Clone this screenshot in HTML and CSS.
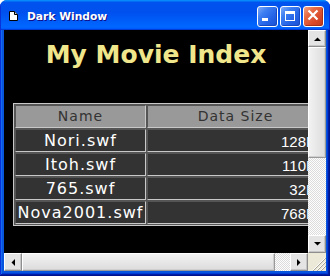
FILE: index.html
```html
<!DOCTYPE html>
<html>
<head>
<meta charset="utf-8">
<title>Dark Window</title>
<link rel="stylesheet" href="styles.css">
</head>
<body>
<div class="window">
  <div class="titlebar">
    <svg class="appicon" width="9" height="10" viewBox="0 0 9 10"><path d="M.5.5h5l3 3v6h-8z" fill="#fff" stroke="#000"/><path d="M5.5.5v3h3" fill="#ccc" stroke="#000"/></svg>
    <span class="title">Dark Window</span>
    <div class="tbtns">
      <div class="tbtn blue"><svg width="19" height="19" viewBox="0 0 19 19"><rect x="4" y="11" width="6" height="3" fill="#fff"/></svg></div>
      <div class="tbtn blue"><svg width="19" height="19" viewBox="0 0 19 19"><rect x="4.5" y="4.5" width="9" height="9" fill="none" stroke="#fff"/><rect x="4" y="4" width="10" height="3" fill="#fff"/></svg></div>
      <div class="tbtn red"><svg width="19" height="19" viewBox="0 0 19 19"><path d="M4.5 3.5l9 9M13.5 3.5l-9 9" stroke="#fff" stroke-width="2.2" fill="none"/></svg></div>
    </div>
  </div>
  <div class="frame">
    <div class="client">
      <div class="view">
        <h1 class="heading">My Movie Index</h1>
        <table class="grid">
          <thead>
            <tr><th class="h-name">Name</th><th class="h-size">Data Size</th></tr>
          </thead>
          <tbody>
            <tr><td class="name">Nori.swf</td><td class="size">128K</td></tr>
            <tr><td class="name">Itoh.swf</td><td class="size">110K</td></tr>
            <tr><td class="name">765.swf</td><td class="size">32K</td></tr>
            <tr><td class="name">Nova2001.swf</td><td class="size">768K</td></tr>
          </tbody>
        </table>
      </div>
      <div class="vscroll">
        <div class="sbtn up"><svg width="7" height="4" viewBox="0 0 7 4"><path d="M0 4h7L3.5.5z"/></svg></div>
        <div class="thumb vthumb"></div>
        <div class="track"></div>
        <div class="sbtn down"><svg width="7" height="4" viewBox="0 0 7 4"><path d="M0 0h7L3.5 3.5z"/></svg></div>
      </div>
      <div class="hscroll">
        <div class="sbtn left"><svg width="4" height="7" viewBox="0 0 4 7"><path d="M4 0v7L.5 3.5z"/></svg></div>
        <div class="thumb hthumb"></div>
        <div class="track"></div>
        <div class="sbtn right"><svg width="4" height="7" viewBox="0 0 4 7"><path d="M0 0v7l3.5-3.5z"/></svg></div>
      </div>
      <div class="grip"><svg width="18" height="18" viewBox="0 0 18 18"><path d="M17 5L5 17M17 9L9 17M17 13L13 17" stroke="#fff" fill="none"/><path d="M18 5L5 18M18 9L9 18M18 13L13 18" stroke="#a8a498" fill="none"/></svg></div>
    </div>
  </div>
</div>
</body>
</html>
```
FILE: styles.css
```css
html, body {
  margin: 0;
  padding: 0;
  background: #fff;
}
body {
  width: 330px;
  height: 276px;
  overflow: hidden;
}
.window {
  width: 330px;
  height: 276px;
  display: flex;
  flex-direction: column;
  border-radius: 7px 7px 0 0;
  overflow: hidden;
  background: #0855dd;
}
.titlebar {
  height: 30px;
  flex: none;
  display: flex;
  align-items: flex-start;
  padding: 0 6px 0 9px;
  background: linear-gradient(180deg, #0997ff, #0053ee 8%, #0050ee 40%, #06f 88%, #06f 93%, #005bff 95%, #003dd7 96%, #003dd7);
  box-shadow: inset 1px 0 #0831d9, inset -1px 0 #0831d9;
}
.appicon {
  margin-top: 11px;
  flex: none;
}
.title {
  flex: 1;
  margin: 10px 0 0 9px;
  font: bold 10.7px/13px "DejaVu Sans", sans-serif;
  color: #fff;
  text-shadow: 1px 1px #0f1089;
  white-space: nowrap;
}
.tbtns {
  display: flex;
  gap: 2px;
  margin-top: 6px;
}
.tbtn {
  width: 21px;
  height: 21px;
  box-sizing: border-box;
  border: 1px solid #fff;
  border-radius: 3px;
}
.tbtn svg {
  display: block;
}
.tbtn.blue {
  background: linear-gradient(135deg, #7eaaf8 0%, #3d7ef2 30%, #2462e6 65%, #1a50d2 100%);
  box-shadow: inset -1px -1px #1548c0;
}
.tbtn.red {
  background: linear-gradient(135deg, #f3a487 0%, #e86c45 30%, #d94a2a 65%, #c03a1e 100%);
  box-shadow: inset -1px -1px #a8321a;
}
.frame {
  flex: 1;
  padding: 0 4px 5px;
  box-shadow: inset -1px -1px #00138c, inset 1px 0 #0831d9, inset -2px -2px #001ea0, inset 2px 0 #166aee, inset -3px -3px #003bda, inset 3px 0 #0855dd;
}
.client {
  display: grid;
  grid-template-columns: 304px 18px;
  grid-template-rows: 223px 18px;
}
.view {
  background: #000;
  overflow: hidden;
}
.heading {
  margin: 10px 0 34px;
  width: 304px;
  text-align: center;
  font: bold 25px/29px "DejaVu Sans", sans-serif;
  color: #f0e68c;
  white-space: nowrap;
}
.grid {
  margin-left: 9px;
  table-layout: fixed;
  width: 313px;
  border-collapse: separate;
  border-spacing: 1px;
  border: 1px solid #c8c8c8;
  background: #555;
}
.grid th,
.grid td {
  padding: 0;
  border: 1px solid;
  border-color: #555 #c8c8c8 #c8c8c8 #555;
  white-space: nowrap;
}
.h-name {
  box-sizing: border-box;
  width: 131px;
}
.h-size {
  box-sizing: border-box;
  width: 177px;
}
.grid th {
  background: #999;
  color: #333;
  font: normal 14px/21px "DejaVu Sans", sans-serif;
  letter-spacing: 1px;
  text-align: center;
}
.grid td {
  background: #333;
  color: #fff;
}
.grid td.name {
  font: 16px/21px "DejaVu Sans", sans-serif;
  letter-spacing: 1px;
  text-align: center;
}
.grid td.size {
  font: 15px/18px "Liberation Sans", Arial, sans-serif;
  padding: 3px 7px 0 0;
  text-align: right;
}
.vscroll {
  display: flex;
  flex-direction: column;
}
.hscroll {
  display: flex;
}
.sbtn {
  flex: none;
  width: 18px;
  height: 18px;
  box-sizing: border-box;
  display: flex;
  align-items: center;
  justify-content: center;
  background: #e4e4e4;
  border: 1px solid;
  border-color: #fff #8e8e8e #8e8e8e #fff;
  box-shadow: inset -1px -1px #c6c6c6;
}
.sbtn svg {
  display: block;
}
.vscroll .up {
  height: 17px;
}
.thumb {
  flex: none;
  box-sizing: border-box;
  border: 1px solid;
  border-color: #fff #9a9a9a #9a9a9a #fff;
  box-shadow: inset -1px -1px #cfcfcf;
}
.vthumb {
  height: 111px;
  background: linear-gradient(90deg, #f2f2f2, #dcdcdc);
}
.hthumb {
  width: 253px;
  background: linear-gradient(180deg, #f2f2f2, #dcdcdc);
}
.track {
  flex: 1;
  background: repeating-conic-gradient(#fdfdfd 0% 25%, #dcdcdc 0% 50%) 0 0 / 2px 2px;
}
.grip {
  background: #ece9d8;
}
.grip svg {
  display: block;
}
```
